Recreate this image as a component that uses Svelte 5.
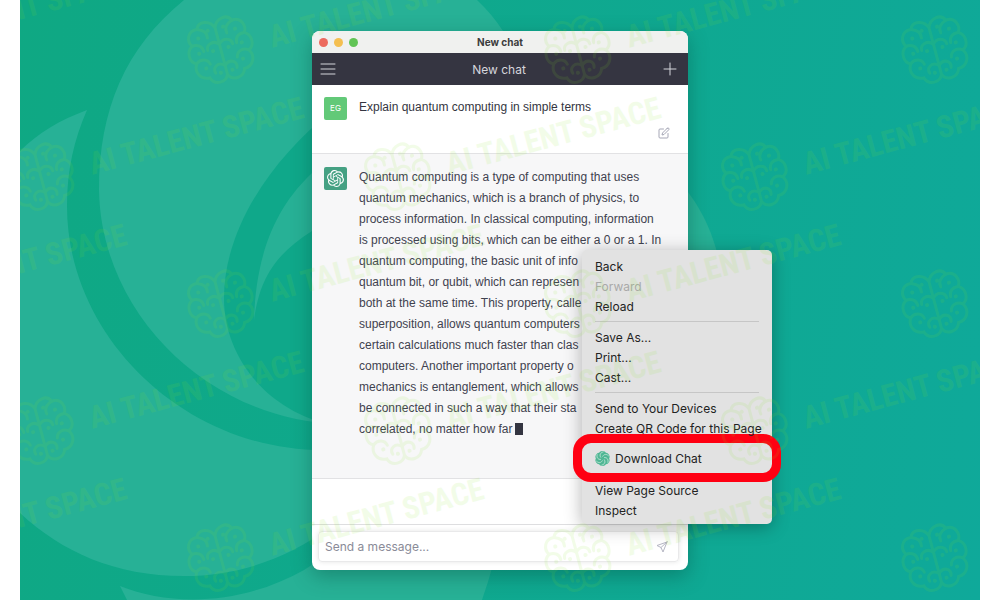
<script>
  const message = 'Explain quantum computing in simple terms';
  const answer = [
    'Quantum computing is a type of computing that uses',
    'quantum mechanics, which is a branch of physics, to',
    'process information. In classical computing, information',
    'is processed using bits, which can be either a 0 or a 1. In',
    'quantum computing, the basic unit of info',
    'quantum bit, or qubit, which can represen',
    'both at the same time. This property, calle',
    'superposition, allows quantum computers',
    'certain calculations much faster than clas',
    'computers. Another important property o',
    'mechanics is entanglement, which allows',
    'be connected in such a way that their sta',
    'correlated, no matter how far',
  ];

  const menu = [
    [{ label: 'Back' }, { label: 'Forward', disabled: true }, { label: 'Reload' }],
    [{ label: 'Save As...' }, { label: 'Print...' }, { label: 'Cast...' }],
    [{ label: 'Send to Your Devices' }, { label: 'Create QR Code for this Page' }],
    [{ label: 'Download Chat', marked: true }],
    [{ label: 'View Page Source' }, { label: 'Inspect' }],
  ];

  // staggered rows of stamps, repeated across the canvas
  const stamps = [];
  for (let row = 0; row < 6; row++) {
    for (let col = -1; col < 3; col++) {
      const x = (row % 2 === 0 ? 201 : 21) + col * 357;
      if (x > -260) stamps.push({ x, y: 50 + row * 127 });
    }
  }

  const petals = [0, 60, 120, 180, 240, 300];
  let draft = $state('');
</script>

<div class="stage">
  <svg class="backdrop" viewBox="0 0 960 600" preserveAspectRatio="xMidYMid slice" aria-hidden="true">
    <path d="M164 0 C105 48 79 110 79 190 C81 315 190 420 318 424 V424 L600 300 L540 110 C520 85 505 60 483 31 Q472 14 457 0 Z" />
    <path d="M67 110 C40 120 18 133 0 151 V513 C42 552 95 576 164 576 C220 576 268 558 312 526 V450 C170 455 47 340 47 206 C47 170 54 140 67 110 Z" />
    <path class="hollow" d="M312 111 C250 160 204 230 204 298 C204 360 250 412 312 425 Z" />
    <path d="M292 173 C258 205 236 250 234 320 C240 277 256 254 292 231 Z" />
    <path d="M100 586 C150 606 220 606 284 570 L330 540 L480 530 Q476 560 462 600 H107 Z" />
    <path d="M650 170 C680 203 694 232 701 270 L650 300 Z" />
  </svg>

  <main class="window">
    <header class="titlebar">
      <div class="lights">
        <button class="light close" aria-label="Close"></button>
        <button class="light minimize" aria-label="Minimize"></button>
        <button class="light zoom" aria-label="Zoom"></button>
      </div>
      <span>New chat</span>
    </header>

    <nav class="navbar">
      <button class="icon-button" aria-label="Open menu">
        <svg width="16" height="16" viewBox="0 0 16 16"><path d="M1 3 H15 M1 8 H15 M1 13 H15" /></svg>
      </button>
      <h1>New chat</h1>
      <button class="icon-button" aria-label="New chat">
        <svg width="16" height="16" viewBox="0 0 16 16"><path d="M8 2 V14 M2 8 H14" /></svg>
      </button>
    </nav>

    <section class="row user">
      <div class="avatar initials">EG</div>
      <p>{message}</p>
      <button class="edit" aria-label="Edit message">
        <svg width="12" height="12" viewBox="0 0 24 24">
          <path d="M11 4H4a2 2 0 0 0-2 2v14a2 2 0 0 0 2 2h14a2 2 0 0 0 2-2v-7" />
          <path d="M18.500 2.500a2.121 2.121 0 0 1 3 3L12 15l-4 1 1-4 9.500-9.500z" />
        </svg>
      </button>
    </section>

    <section class="row assistant">
      <div class="avatar logo">
        <svg class="knot" viewBox="0 0 24 24" aria-hidden="true">
          <path d="M22.2819 9.8211a5.9847 5.9847 0 0 0-.5157-4.9108 6.0462 6.0462 0 0 0-6.5098-2.9A6.0651 6.0651 0 0 0 4.9807 4.1818a5.9847 5.9847 0 0 0-3.9977 2.9 6.0462 6.0462 0 0 0 .7427 7.0966 5.98 5.98 0 0 0 .511 4.9107 6.051 6.051 0 0 0 6.5146 2.9001A5.9847 5.9847 0 0 0 13.2599 24a6.0557 6.0557 0 0 0 5.7718-4.2058 5.9894 5.9894 0 0 0 3.9977-2.9001 6.0557 6.0557 0 0 0-.7475-7.0729zm-9.022 12.6081a4.4755 4.4755 0 0 1-2.8764-1.0408l.1419-.0804 4.7783-2.7582a.7948.7948 0 0 0 .3927-.6813v-6.7369l2.02 1.1686a.071.071 0 0 1 .038.052v5.5826a4.504 4.504 0 0 1-4.4945 4.4944zm-9.6607-4.1254a4.4708 4.4708 0 0 1-.5346-3.0137l.142.0852 4.783 2.7582a.7712.7712 0 0 0 .7806 0l5.8428-3.3685v2.3324a.0804.0804 0 0 1-.0332.0615L9.74 19.9502a4.4992 4.4992 0 0 1-6.1408-1.6464zM2.3408 7.8956a4.485 4.485 0 0 1 2.3655-1.9728V11.6a.7664.7664 0 0 0 .3879.6765l5.8144 3.3543-2.0201 1.1685a.0757.0757 0 0 1-.071 0l-4.8303-2.7865A4.504 4.504 0 0 1 2.3408 7.872zm16.5963 3.8558L13.1038 8.364 15.1192 7.2a.0757.0757 0 0 1 .071 0l4.8303 2.7913a4.4944 4.4944 0 0 1-.6765 8.1042v-5.6772a.79.79 0 0 0-.407-.667zm2.0107-3.0231l-.142-.0852-4.7735-2.7818a.7759.7759 0 0 0-.7854 0L9.409 9.2297V6.8974a.0662.0662 0 0 1 .0284-.0615l4.8303-2.7866a4.4992 4.4992 0 0 1 6.6802 4.66zM8.3065 12.863l-2.02-1.1638a.0804.0804 0 0 1-.038-.0567V6.0742a4.4992 4.4992 0 0 1 7.3757-3.4537l-.142.0805L8.704 5.459a.7948.7948 0 0 0-.3927.6813zm1.0976-2.3654l2.602-1.4998 2.6069 1.4998v2.9994l-2.5974 1.4997-2.6067-1.4997Z" />
        </svg>
      </div>
      <p>
        {#each answer as line, index}
          <span class="line">{line}{#if index === answer.length - 1}<span class="cursor"></span>{/if}</span>
        {/each}
      </p>
    </section>

    <form class="composer" onsubmit={(event) => event.preventDefault()}>
      <div class="field">
        <input aria-label="Send a message" placeholder="Send a message..." bind:value={draft} />
        <button class="send" aria-label="Send">
          <svg width="12" height="12" viewBox="0 0 24 24"><path d="M22 2L14 22L10 13L2 9L22 2Z M22 2L10 13" /></svg>
        </button>
      </div>
    </form>

    <div class="menu" role="menu">
      {#each menu as group}
        <div class="group" class:marked={group[0].marked}>
          {#each group as item}
            <button role="menuitem" disabled={item.disabled}>
              {#if item.marked}
                <svg class="swirl" width="15" height="15" viewBox="0 0 24 24" aria-hidden="true">
                  {#each petals as angle}
                    <circle cx="12" cy="6" r="6" transform="rotate({angle} 12 12)" />
                  {/each}
                  {#each petals as angle}
                    <path transform="rotate({angle} 12 12)" d="M12 9 C14 5 18 4 22 8" />
                  {/each}
                </svg>
              {/if}
              {item.label}
            </button>
          {/each}
        </div>
      {/each}
    </div>
  </main>

  <svg class="watermark" viewBox="0 0 960 600" preserveAspectRatio="xMidYMid slice" aria-hidden="true">
    <defs>
      <g id="brain">
        <path d="M0 -23 C-3 -32 -15 -34 -18 -26 C-28 -27 -31 -17 -27 -11 C-34 -7 -34 4 -27 7 C-32 15 -27 24 -18 24 C-15 33 -3 33 0 25 C3 33 15 33 18 24 C27 24 32 15 27 7 C34 4 34 -7 27 -11 C31 -17 28 -27 18 -26 C15 -34 3 -32 0 -23 Z M0 -23 V25" />
        <path d="M-18 -26 C-12 -24 -9 -20 -10 -15 M-27 -11 C-21 -12 -17 -8 -17 -3 M-27 7 C-22 3 -15 5 -14 11 M0 -6 C-5 -12 -13 -9 -13 -3 M0 16 C-6 10 -13 15 -11 21 M18 -26 C12 -24 9 -20 10 -15 M27 -11 C21 -12 17 -8 17 -3 M27 7 C22 3 15 5 14 11 M0 -6 C5 -12 13 -9 13 -3 M0 16 C6 10 13 15 11 21" />
        <path class="dots" d="M-8 -22h.1 M8 -22h.1 M-19 -17h.1 M19 -17h.1 M-22 -2h.1 M22 -2h.1 M-8 -1h.1 M8 -1h.1 M-19 14h.1 M19 14h.1 M-6 22h.1 M6 22h.1" />
      </g>
    </defs>
    {#each stamps as stamp}
      <g transform="translate({stamp.x} {stamp.y}) rotate(-15)">
        <use href="#brain" />
        <text x="50" y="11">AI TALENT SPACE</text>
      </g>
    {/each}
  </svg>
</div>

<style>
  :global(body) {
    margin: 0;
    background: #fff;
  }

  * {
    box-sizing: border-box;
  }

  button,
  input {
    padding: 0;
    border: 0;
    background: none;
    color: inherit;
    font: inherit;
  }

  .stage {
    position: relative;
    display: flex;
    justify-content: center;
    align-items: flex-start;
    min-height: 100vh;
    margin: 0 20px;
    padding: 31px 0 30px;
    overflow: hidden;
    background: linear-gradient(100deg, #0fa883, #0fa99a);
    font-family: Inter, 'Liberation Sans', sans-serif;
    font-size: 12px;
  }

  .backdrop,
  .watermark {
    position: absolute;
    inset: 0;
    width: 100%;
    height: 100%;
  }

  .backdrop path {
    fill: #27b196;
  }

  .backdrop .hollow {
    fill: #0fa88a;
  }

  .watermark {
    pointer-events: none;
    opacity: 0.1;
    fill: none;
    stroke: #86e626;
    stroke-width: 3;
    stroke-linecap: round;
  }

  .watermark .dots {
    stroke-width: 4;
  }

  .watermark text {
    fill: #86e626;
    stroke: none;
    font: bold 31px 'Roboto Condensed', Roboto, sans-serif;
  }

  .window {
    position: relative;
    display: flex;
    flex-direction: column;
    width: 376px;
    min-height: calc(100vh - 61px);
    border-radius: 8px;
    background: #fff;
    box-shadow: 0 6px 20px rgba(0, 60, 50, 0.35);
  }

  .titlebar {
    display: grid;
    grid-template-columns: 1fr auto 1fr;
    align-items: center;
    height: 22px;
    padding: 0 7px;
    border-radius: 8px 8px 0 0;
    background: #f0f1ef;
    color: #3c3c3c;
    font-size: 10px;
    font-weight: 700;
  }

  .lights {
    display: flex;
    gap: 6px;
  }

  .light {
    width: 9px;
    height: 9px;
    border-radius: 50%;
  }

  .close {
    background: #ec6a5e;
  }

  .minimize {
    background: #f4bf50;
  }

  .zoom {
    background: #61c455;
  }

  .navbar {
    display: flex;
    align-items: center;
    justify-content: space-between;
    height: 32px;
    padding: 0 10px 0 8px;
    background: #353541;
    color: #d5d6dc;
  }

  .navbar h1 {
    margin: 0;
    font-size: 12px;
    font-weight: 400;
  }

  .icon-button {
    display: flex;
  }

  .icon-button svg,
  .edit svg,
  .send svg {
    fill: none;
    stroke: currentColor;
    stroke-linecap: round;
    stroke-linejoin: round;
  }

  .row {
    display: flex;
    gap: 12px;
    padding: 12px 12px;
    border-bottom: 1px solid #e2e2e4;
    line-height: 21px;
  }

  .row p {
    margin: 0;
    font-family: 'Liberation Sans', sans-serif;
  }

  .user {
    height: 69px;
    color: #343541;
  }

  .assistant {
    height: 325px;
    padding-top: 13px;
    background: #f7f7f8;
    color: #3f424f;
  }

  .avatar {
    display: flex;
    flex: none;
    align-items: center;
    justify-content: center;
    width: 23px;
    height: 23px;
    border-radius: 2px;
    color: #fff;
  }

  .initials {
    background: #62c978;
    font-size: 8px;
  }

  .logo {
    background: #45a183;
  }

  .knot {
    width: 17px;
    height: 17px;
    fill: #fff;
  }

  .edit {
    align-self: flex-end;
    margin: 0 6px 2px auto;
    color: #a6a7b6;
  }

  .edit svg,
  .send svg {
    display: block;
    stroke-width: 2;
  }

  .line {
    display: block;
    white-space: nowrap;
  }

  .cursor {
    display: inline-block;
    width: 8px;
    height: 12px;
    margin-left: 3px;
    background: #343541;
    vertical-align: -2px;
  }

  .composer {
    margin-top: auto;
    padding: 6px 9px 8px 6px;
    border-top: 1px solid #dedee0;
  }

  .field {
    display: flex;
    align-items: center;
    height: 31px;
    padding: 0 10px 0 6px;
    border: 1px solid #e9e9ea;
    border-radius: 4px;
    box-shadow: 0 0 5px rgba(0, 0, 0, 0.1);
  }

  .field input {
    flex: 1;
    min-width: 0;
    outline: 0;
  }

  .field input::placeholder {
    color: #8a8b98;
    opacity: 1;
  }

  .send {
    color: #b5b6c3;
  }

  .menu {
    position: absolute;
    top: 219px;
    left: 270px;
    width: 190px;
    padding: 6px 0 4px;
    border-radius: 5px;
    background: #e2e2e2;
    box-shadow: 0 3px 18px rgba(0, 0, 0, 0.3);
    color: #222;
  }

  .group {
    display: flex;
    flex-direction: column;
    margin: 0 13px;
  }

  .group:nth-child(-n + 2) {
    margin-bottom: 5px;
    padding-bottom: 5px;
    border-bottom: 1px solid #c6c6c6;
  }

  .group button {
    display: flex;
    align-items: center;
    gap: 5px;
    height: 20px;
    white-space: nowrap;
  }

  .group button:disabled {
    color: #a9a9a9;
  }

  .group.marked {
    height: 48px;
    margin: -4px -9px -2px;
    padding: 5px 13px;
    border: 9px solid #ff0012;
    border-radius: 18px;
  }

  .swirl {
    fill: #50b794;
  }

  .swirl path {
    fill: none;
    stroke: #dff0e9;
    stroke-width: 1;
  }
</style>
